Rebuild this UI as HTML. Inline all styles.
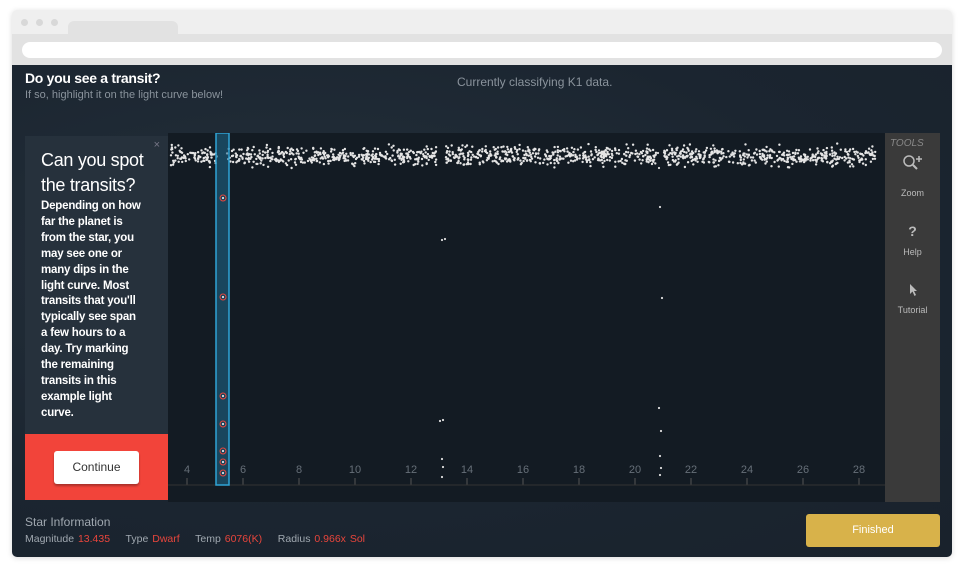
<!DOCTYPE html>
<html><head><meta charset="utf-8"><style>
*{margin:0;padding:0;box-sizing:border-box}
body{width:964px;height:571px;background:#fff;font-family:"Liberation Sans",sans-serif;position:relative;overflow:hidden}
.frame{position:absolute;left:12px;top:10px;width:940px;height:547px;background:#efefef;border-radius:5px;box-shadow:0 1px 6px rgba(0,0,0,.15);overflow:hidden}
.dot{position:absolute;top:9px;width:7px;height:7px;border-radius:50%;background:#d8d8d8}
.tab{position:absolute;left:56px;top:11px;width:110px;height:24px;background:#e2e2e2;border-radius:6px 6px 0 0}
.bar{position:absolute;left:0;top:24px;width:940px;height:31px;background:#e2e2e2}
.addr{position:absolute;left:10px;top:32px;width:920px;height:16px;background:#fff;border-radius:8px}
.app{position:absolute;left:0;top:55px;width:940px;height:492px;background:radial-gradient(ellipse at 30% 40%,#24303b 0%,#1b2530 60%,#19222c 100%)}
.t1{position:absolute;left:13px;top:5px;color:#fff;font-weight:bold;font-size:14px;letter-spacing:-0.3px}
.t2{position:absolute;left:13px;top:24px;color:#8a939c;font-size:11px}
.cur{position:absolute;left:445px;top:10px;color:#8a939c;font-size:12px}
.chart{position:absolute;left:156px;top:68px;width:717px;height:369px;background:#131b23}
.tools{position:absolute;left:873px;top:68px;width:55px;height:369px;background:#3a3a3a;color:#bbb;font-size:9px;text-align:center}
.tut{position:absolute;left:13px;top:71px;width:143px;height:364px;background:#26313c}
.tut h2{position:absolute;left:16px;top:12px;color:#fff;font-size:18px;font-weight:normal;line-height:25px;letter-spacing:-0.3px}
.tut p{position:absolute;left:16px;top:63px;width:104px;color:#fff;font-size:11.5px;font-weight:bold;line-height:15.9px;letter-spacing:-0.2px}
.red{position:absolute;left:0;top:298px;width:143px;height:66px;background:#f2443a}
.btn{position:absolute;left:29px;top:17px;width:85px;height:33px;background:#fff;border-radius:3px;font-size:12px;text-align:center;line-height:33px;color:#333;box-shadow:0 2px 2px rgba(0,0,0,.3)}
.si{position:absolute;left:13px;top:450px;color:#a0a8b0;font-size:12px}
.sd{position:absolute;left:13px;top:468px;color:#a0a8b0;font-size:10.5px;word-spacing:1px}
.sd b{color:#e8453c;font-weight:normal}
.fin{position:absolute;left:794px;top:449px;width:134px;height:33px;background:#d8b24a;border-radius:3px;color:#fff;font-size:11px;text-align:center;line-height:33px}
</style></head><body>
<div class="frame">
<div class="dot" style="left:9px"></div><div class="dot" style="left:24px"></div><div class="dot" style="left:39px"></div>
<div class="tab"></div><div class="bar"></div><div class="addr"></div>
<div class="app">
<div class="t1">Do you see a transit?</div>
<div class="t2">If so, highlight it on the light curve below!</div>
<div class="cur">Currently classifying K1 data.</div>
<div class="chart"><svg id="sv" width="717" height="369"></svg></div>
<div class="tools">
<div style="position:absolute;left:5px;top:5px;font-style:italic;color:#888;font-size:10px">TOOLS</div>
<svg style="position:absolute;left:16px;top:20px" width="24" height="20"><circle cx="8" cy="8" r="5" fill="none" stroke="#bbb" stroke-width="1.5"/><line x1="12" y1="12" x2="16" y2="16" stroke="#bbb" stroke-width="2"/><path d="M18 3v6M15 6h6" stroke="#bbb" stroke-width="1.5"/></svg>
<div style="position:absolute;width:55px;top:55px">Zoom</div>
<div style="position:absolute;width:55px;top:90px;font-size:14px;font-weight:bold">?</div>
<div style="position:absolute;width:55px;top:114px">Help</div>
<svg style="position:absolute;left:23px;top:150px" width="10" height="14"><path d="M2 1L2 11L4.5 8.5L6.5 13L8 12L6 8H9Z" fill="#bbb"/></svg>
<div style="position:absolute;width:55px;top:172px">Tutorial</div>
</div>
<div class="tut"><span style="position:absolute;right:8px;top:3px;color:#778;font-size:11px">×</span>
<h2>Can you spot<br>the transits?</h2>
<p>Depending on how far the planet is from the star, you may see one or many dips in the light curve. Most transits that you'll typically see span a few hours to a day. Try marking the remaining transits in this example light curve.</p>
<div class="red"><div class="btn">Continue</div></div></div>
<div class="si">Star Information</div>
<div class="sd">Magnitude <b>13.435</b> &nbsp;&nbsp; Type <b>Dwarf</b> &nbsp;&nbsp; Temp <b>6076(K)</b> &nbsp;&nbsp; Radius <b>0.966x Sol</b></div>
<div class="fin">Finished</div>
</div></div>
<script>
var s='',seed=7;function r(){seed=(seed*16807)%2147483647;return seed/2147483647;}
function X(v){return 19+(v-4)*28;}
for(var v=4;v<=28;v+=2){s+='<text x="'+X(v)+'" y="340" fill="#666f78" font-size="11" text-anchor="middle" font-family="Liberation Sans">'+v+'</text><line x1="'+X(v)+'" y1="345" x2="'+X(v)+'" y2="352" stroke="#555"/>';}
s+='<line x1="0" y1="352" x2="717" y2="352" stroke="#333"/>';
for(var i=0;i<1400;i++){var x=r()*705+3;if(Math.abs(x-54)<5||Math.abs(x-273)<4||Math.abs(x-492)<4)continue;var y=23+(r()+r()+r()-1.5)*9;s+='<circle cx="'+x.toFixed(1)+'" cy="'+y.toFixed(1)+'" r="1.2" fill="#e4e4e4"/>';}
s+='<rect x="48" y="0" width="13" height="352" fill="#1f6a8e" fill-opacity=".55" stroke="#2fa4d6" stroke-width="1.5"/>';
[65,164,263,291,318,329,340].forEach(function(y){s+='<circle cx="55" cy="'+y+'" r="3" fill="none" stroke="#e8453c"/><circle cx="55" cy="'+y+'" r="1" fill="#fff"/>';});
[[274,107],[277,106],[272,288],[275,287],[274,326],[275,334],[274,344],[490,20],[491,35],[492,74],[494,165],[491,275],[493,298],[492,323],[493,335],[492,342]].forEach(function(p){s+='<circle cx="'+p[0]+'" cy="'+p[1]+'" r="1.1" fill="#ddd"/>';});
document.getElementById('sv').innerHTML=s;
</script>
</body></html>
